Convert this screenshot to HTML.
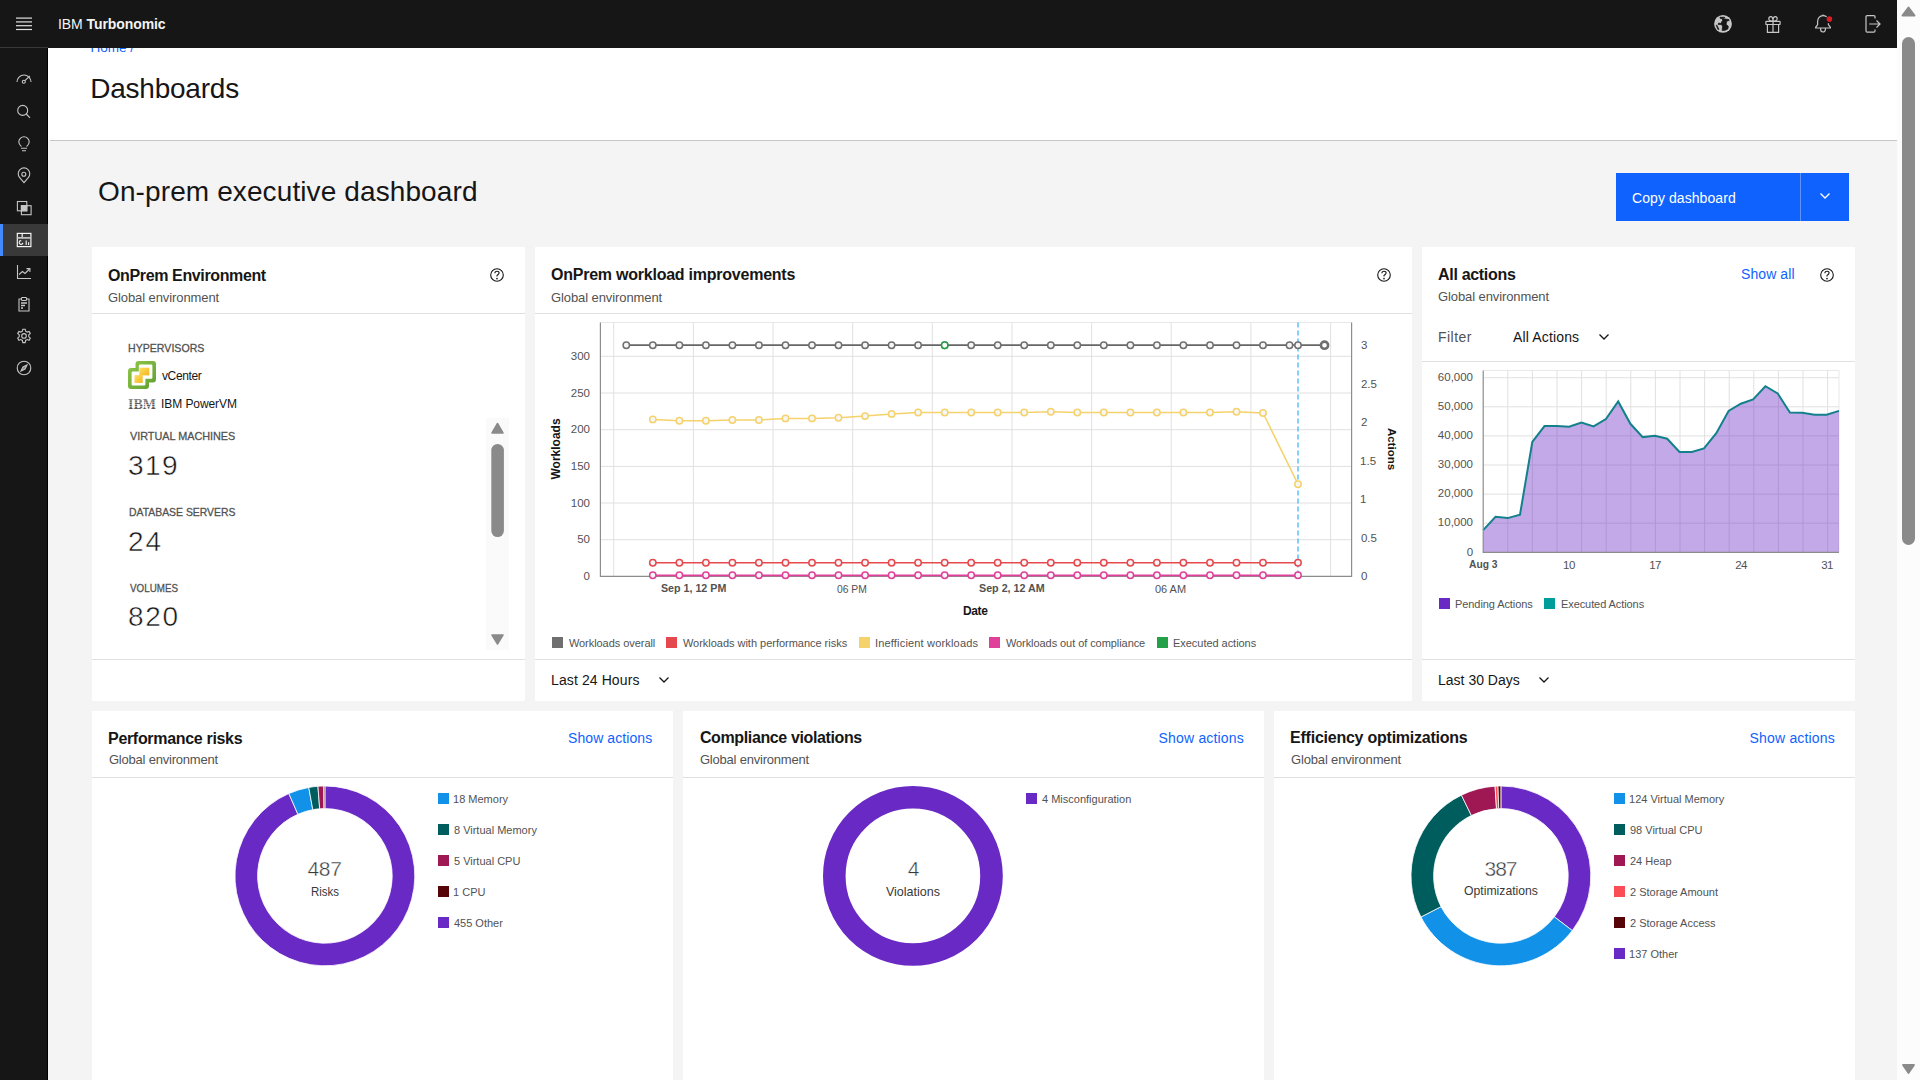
<!DOCTYPE html>
<html><head><meta charset="utf-8">
<style>
*{box-sizing:border-box;margin:0;padding:0}
html,body{width:1920px;height:1080px;overflow:hidden;background:#f4f4f4;font-family:"Liberation Sans",sans-serif;color:#161616}
.abs{position:absolute}
#topbar{position:absolute;left:0;top:0;width:1897px;height:48px;background:#161616;z-index:5}
.tb{z-index:6}
#sidebar{position:absolute;left:0;top:48px;width:48px;height:1032px;background:#161616;border-right:1px solid #000}
#sideline{position:absolute;left:0;top:47px;width:48px;height:1px;background:#393939;z-index:6}
#pagehead{position:absolute;left:48px;top:48px;width:1849px;height:92px;background:#fff}
#headline{position:absolute;left:50px;top:140px;width:1847px;height:1px;background:#c6c6c6}
#vscroll{position:absolute;left:1897px;top:0;width:23px;height:1080px;background:#fcfcfc}
.card{position:absolute;background:#fff}
.sep{position:absolute;height:1px;background:#e0e0e0}
.ttl{position:absolute;font-size:16px;font-weight:bold;white-space:nowrap;line-height:1}
.sub{position:absolute;font-size:12px;color:#525252;white-space:nowrap;line-height:1}
.lnk{position:absolute;font-size:14px;color:#0f62fe;white-space:nowrap;line-height:1}
.t{position:absolute;white-space:nowrap;line-height:1}
.lbl{font-size:12px;color:#525252;font-weight:normal;letter-spacing:0.2px}
.val{font-size:13px;color:#161616}
.big{font-size:28px;color:#161616}
.ax{font-size:12px;color:#525252}
.axb{font-size:12px;color:#393939;font-weight:bold}
.leg{font-size:12px;color:#525252}
.sq{width:11px;height:11px}
.drop{font-size:14px;color:#161616}
.dnum{font-size:20px;color:#393939}
.dlbl{font-size:14px;color:#393939}
svg{position:absolute;overflow:visible}
</style></head>
<body>
<div id="sideline"></div>
<div id="sidebar"></div>
<div id="pagehead"></div>
<div id="headline"></div>
<div id="vscroll"></div>


<!-- sidebar icons -->
<div class="abs" style="left:0;top:224px;width:48px;height:32px;background:#393939"></div>
<div class="abs" style="left:0;top:224px;width:3px;height:32px;background:#4589ff"></div>
<svg style="left:16px;top:71px" width="16" height="16" fill="none" stroke="#c6c6c6" stroke-width="1.1">
  <path d="M1 11 A7 7 0 0 1 15 11"/><circle cx="7.8" cy="10.8" r="1.5"/><path d="M8.9 9.7 L13.9 4.9"/>
</svg>
<svg style="left:16px;top:103px" width="16" height="16" fill="none" stroke="#c6c6c6" stroke-width="1.1">
  <circle cx="6.7" cy="7.4" r="5"/><path d="M10.3 11 L14 14.8"/>
</svg>
<svg style="left:16px;top:135px" width="16" height="16" fill="none" stroke="#c6c6c6" stroke-width="1.1">
  <path d="M5.4 11.6 C4.2 10.5 2.8 9.2 2.8 7 A5.2 5.2 0 0 1 13.2 7 C13.2 9.2 11.8 10.5 10.6 11.6"/><path d="M5 13.2 H11 M6 15.8 H10"/>
</svg>
<svg style="left:16px;top:167px" width="16" height="16" fill="none" stroke="#c6c6c6" stroke-width="1.1">
  <path d="M8 15.6 L3.7 10.6 A5.8 5.8 0 1 1 12.3 10.6 Z"/><circle cx="7.8" cy="7.2" r="2"/>
</svg>
<svg style="left:16px;top:199px" width="16" height="16" fill="none" stroke="#c6c6c6" stroke-width="1.1">
  <rect x="1.4" y="2.5" width="9.4" height="9.3"/><rect x="5.4" y="6.7" width="9.7" height="9"/><rect x="5.4" y="6.7" width="5.4" height="5.1" fill="#c6c6c6"/>
</svg>
<svg style="left:16px;top:231px" width="16" height="16" fill="none" stroke="#f4f4f4" stroke-width="1.2">
  <rect x="1.3" y="2.4" width="13.6" height="13.2"/><path d="M1.3 6.9 H14.9" stroke="#c6c6c6" stroke-width="1.7"/><path d="M6.2 2.4 V6.2"/>
  <path d="M6.9 11.9 A1.9 1.9 0 1 1 5.2 9.6" stroke-width="1.1"/><path d="M10.2 9.4 V14 M12.6 11.2 V14" stroke-width="1.1"/>
</svg>
<svg style="left:16px;top:264px" width="16" height="16" fill="none" stroke="#c6c6c6" stroke-width="1.1">
  <path d="M1.5 1 V14.5 H15"/><path d="M3 10.5 L6.5 7.5 L9 9.5 L13.5 5"/><path d="M10.5 4.6 H13.9 V8"/>
</svg>
<svg style="left:16px;top:296px" width="16" height="16" fill="none" stroke="#c6c6c6" stroke-width="1.1">
  <path d="M5 3 H3 V15 H13 V3 H11"/><rect x="5.5" y="1.5" width="5" height="3" rx="0.8"/><path d="M5 7 H11 M5 9.5 H9 M5 12 H7" stroke-width="1.3"/>
</svg>
<svg style="left:16px;top:328px" width="16" height="16" fill="none" stroke="#c6c6c6" stroke-width="1.1">
  <path d="M6.8 1.2 H9.2 L9.6 3.2 L11.2 4.1 L13.1 3.4 L14.3 5.5 L12.8 6.8 V8.8 L14.3 10.1 L13.1 12.2 L11.2 11.5 L9.6 12.4 L9.2 14.6 H6.8 L6.4 12.4 L4.8 11.5 L2.9 12.2 L1.7 10.1 L3.2 8.8 V6.8 L1.7 5.5 L2.9 3.4 L4.8 4.1 L6.4 3.2 Z"/><circle cx="8" cy="7.9" r="2.3"/>
</svg>
<svg style="left:16px;top:360px" width="16" height="16" fill="none" stroke="#c6c6c6" stroke-width="1.1">
  <circle cx="8" cy="8" r="6.8"/><path d="M11 5 L9 9 L5 11 L7 7 Z" fill="#c6c6c6" fill-opacity="0.6"/>
</svg>

<!-- page header -->
<div id="topbar"></div>
<!-- top right icons -->
<svg class="tb" style="left:1713px;top:14px" width="20" height="20">
  <circle cx="10" cy="9.9" r="8.9" fill="#c6c6c6"/>
  <path d="M6.9 3.3 L11.8 3.3 L10.4 4.7 L15.8 5.6 L16.2 6.4 L13.6 7.3 L13.1 10.4 L15.3 12.2 L14.9 14.9 L12.2 16.2 L9.1 16.4 L9.6 12.2 L8.2 10.4 L5.1 10.4 L5.6 9.1 L7.8 9.6 L9.6 6.4 L9.1 4.4 L7.3 4.4 Z" fill="#161616" stroke="#161616" stroke-width="0.8" stroke-linejoin="round"/>
  <path d="M3.1 11.3 L3.8 11.1 L6 15.3 L5.1 15.8 Z" fill="#161616" stroke="#161616" stroke-width="0.6"/>
</svg>
<svg class="tb" style="left:1763px;top:14px" width="20" height="20" fill="none" stroke="#c6c6c6" stroke-width="1.2">
  <rect x="2.9" y="7.3" width="14.2" height="3.2" rx="0.6"/><path d="M4.4 10.5 V18.3 H15.6 V10.5"/><path d="M10 7.3 V18.3"/>
  <path d="M10 7.2 C8.5 7.2 5.8 7 5.8 4.8 C5.8 3.6 6.7 2.7 7.8 2.7 C9.2 2.7 10 4.2 10 7.2 C10 4.2 10.8 2.7 12.2 2.7 C13.3 2.7 14.2 3.6 14.2 4.8 C14.2 7 11.5 7.2 10 7.2 Z"/>
</svg>
<svg class="tb" style="left:1813px;top:14px" width="20" height="20" fill="none" stroke="#c6c6c6" stroke-width="1.2">
  <path d="M13.6 2.9 C12.6 2 11.3 1.6 10 1.6 C6.8 1.6 4.6 4.3 4.6 7.6 V10.6 L2.6 13.3 V14 H17.4 V13.3 L15.4 10.6 V9.2" stroke-linejoin="round"/><path d="M10 0.6 V1.6"/><path d="M7.6 14 V15.6 A2.4 2.4 0 0 0 12.4 15.6 V14"/>
</svg>
<svg class="tb" style="left:1823px;top:14px" width="12" height="12"><circle cx="6.4" cy="5.1" r="2.8" fill="#da1e28"/></svg>
<svg class="tb" style="left:1862px;top:14px" width="20" height="20" fill="none" stroke="#c6c6c6" stroke-width="1.2">
  <path d="M13 4.6 V2.7 Q13 1.6 11.9 1.6 H5.1 Q4 1.6 4 2.7 V17.1 Q4 18.2 5.1 18.2 H11.9 Q13 18.2 13 17.1 V15.5"/><path d="M7.2 10 H17.6 M14.5 6.5 L18 10 L14.5 13.5"/>
</svg>

<!-- top bar content -->
<svg class="tb" style="left:0;top:0" width="48" height="48">
  <g fill="#e0e0e0"><rect x="16" y="17.5" width="16" height="1.2"/><rect x="16" y="21.3" width="16" height="1.2"/><rect x="16" y="25.1" width="16" height="1.2"/><rect x="16" y="28.9" width="16" height="1.2"/></g>
</svg>


<!-- copy button -->
<div class="abs" style="left:1616px;top:173px;width:184px;height:48px;background:#0f62fe"></div>
<div class="abs" style="left:1800px;top:173px;width:1px;height:48px;background:#5f94fe"></div>
<div class="abs" style="left:1801px;top:173px;width:48px;height:48px;background:#0f62fe"></div>

<!-- cards -->
<div class="card" style="left:92px;top:247px;width:433px;height:454px"></div>
<div class="card" style="left:535px;top:247px;width:877px;height:454px"></div>
<div class="card" style="left:1422px;top:247px;width:433px;height:454px"></div>
<div class="card" style="left:92px;top:711px;width:581px;height:369px"></div>
<div class="card" style="left:683px;top:711px;width:581px;height:369px"></div>
<div class="card" style="left:1274px;top:711px;width:581px;height:369px"></div>

<div class="sep" style="left:92px;top:313px;width:433px"></div>
<div class="sep" style="left:535px;top:313px;width:877px"></div>
<div class="sep" style="left:1422px;top:361px;width:433px"></div>
<div class="sep" style="left:92px;top:659px;width:433px"></div>
<div class="sep" style="left:535px;top:659px;width:877px"></div>
<div class="sep" style="left:1422px;top:659px;width:433px"></div>
<div class="sep" style="left:92px;top:777px;width:581px"></div>
<div class="sep" style="left:683px;top:777px;width:581px"></div>
<div class="sep" style="left:1274px;top:777px;width:581px"></div>




<!-- help icons -->
<svg style="left:489px;top:267px" width="16" height="16" fill="none" stroke="#161616" stroke-width="1.1"><circle cx="8" cy="8" r="6.3"/><path d="M5.9 6.3 C5.9 5 6.9 4.3 8 4.3 C9.2 4.3 10.1 5.1 10.1 6.1 C10.1 7.3 8.6 7.7 8 8.5 V9.6" /><circle cx="8" cy="11.6" r="0.85" fill="#161616" stroke="none"/></svg>
<svg style="left:1376px;top:267px" width="16" height="16" fill="none" stroke="#161616" stroke-width="1.1"><circle cx="8" cy="8" r="6.3"/><path d="M5.9 6.3 C5.9 5 6.9 4.3 8 4.3 C9.2 4.3 10.1 5.1 10.1 6.1 C10.1 7.3 8.6 7.7 8 8.5 V9.6" /><circle cx="8" cy="11.6" r="0.85" fill="#161616" stroke="none"/></svg>
<svg style="left:1819px;top:267px" width="16" height="16" fill="none" stroke="#161616" stroke-width="1.1"><circle cx="8" cy="8" r="6.3"/><path d="M5.9 6.3 C5.9 5 6.9 4.3 8 4.3 C9.2 4.3 10.1 5.1 10.1 6.1 C10.1 7.3 8.6 7.7 8 8.5 V9.6" /><circle cx="8" cy="11.6" r="0.85" fill="#161616" stroke="none"/></svg>

<!-- card1 content -->
<svg style="left:128px;top:361px" width="28" height="28">
  <defs><linearGradient id="vg" x1="0" y1="0" x2="1" y2="1"><stop offset="0" stop-color="#93c84a"/><stop offset="1" stop-color="#5e9e30"/></linearGradient>
  <linearGradient id="yg" x1="0" y1="0" x2="1" y2="1"><stop offset="0" stop-color="#ffe066"/><stop offset="1" stop-color="#f2b51c"/></linearGradient></defs>
  <path d="M10.5 0 H25 Q28 0 28 3 V18 Q28 21.5 25 21.5 H21 V25 Q21 28 18 28 H3 Q0 28 0 25 V10 Q0 7 3 7 H7.5 V3 Q7.5 0 10.5 0 Z" fill="url(#vg)"/>
  <path d="M12 3.6 H23.2 Q24.4 3.6 24.4 4.8 V16.6 Q24.4 17.8 23.2 17.8 H17.4 V23.2 Q17.4 24.4 16.2 24.4 H4.8 Q3.6 24.4 3.6 23.2 V11.8 Q3.6 10.6 4.8 10.6 H10.8 V4.8 Q10.8 3.6 12 3.6 Z" fill="#fff"/>
  <rect x="11.3" y="6.7" width="10" height="7.7" fill="url(#yg)"/>
  <rect x="6.5" y="14.1" width="8.2" height="7.8" fill="url(#yg)"/>
</svg>
<svg style="left:128px;top:397px" width="28" height="13"><text x="0" y="11.5" font-family="Liberation Serif" font-weight="bold" font-size="14" fill="#555" textLength="28" lengthAdjust="spacingAndGlyphs">IBM</text><g stroke="#fff" stroke-width="0.6"><line x1="0" y1="3" x2="28" y2="3"/><line x1="0" y1="5.2" x2="28" y2="5.2"/><line x1="0" y1="7.4" x2="28" y2="7.4"/><line x1="0" y1="9.6" x2="28" y2="9.6"/></g></svg>
<!-- inner scrollbar -->
<div class="abs" style="left:486px;top:418px;width:23px;height:232px;background:#fafafa"></div>
<svg style="left:486px;top:418px" width="23" height="232" fill="#8a8a8a">
  <path d="M11.5 5.5 L17 15 H6 Z" stroke="#8a8a8a" stroke-width="1.5" stroke-linejoin="round"/>
  <rect x="5.3" y="26" width="12.6" height="93" rx="6.3"/>
  <path d="M11.5 226 L17 217 H6 Z" stroke="#8a8a8a" stroke-width="1.5" stroke-linejoin="round"/>
</svg>

<!-- line chart -->
<svg style="left:0;top:0" width="1920" height="1080">
<line x1="613.7" y1="322.5" x2="613.7" y2="576.4" stroke="#e0e0e0" stroke-width="1"/>
<line x1="693.4" y1="322.5" x2="693.4" y2="576.4" stroke="#e0e0e0" stroke-width="1"/>
<line x1="773.0" y1="322.5" x2="773.0" y2="576.4" stroke="#e0e0e0" stroke-width="1"/>
<line x1="852.7" y1="322.5" x2="852.7" y2="576.4" stroke="#e0e0e0" stroke-width="1"/>
<line x1="932.3" y1="322.5" x2="932.3" y2="576.4" stroke="#e0e0e0" stroke-width="1"/>
<line x1="1012.0" y1="322.5" x2="1012.0" y2="576.4" stroke="#e0e0e0" stroke-width="1"/>
<line x1="1091.6" y1="322.5" x2="1091.6" y2="576.4" stroke="#e0e0e0" stroke-width="1"/>
<line x1="1171.2" y1="322.5" x2="1171.2" y2="576.4" stroke="#e0e0e0" stroke-width="1"/>
<line x1="1250.9" y1="322.5" x2="1250.9" y2="576.4" stroke="#e0e0e0" stroke-width="1"/>
<line x1="1330.6" y1="322.5" x2="1330.6" y2="576.4" stroke="#e0e0e0" stroke-width="1"/>
<line x1="600.4" y1="539.7" x2="1351.6" y2="539.7" stroke="#e0e0e0" stroke-width="1"/>
<line x1="600.4" y1="503.0" x2="1351.6" y2="503.0" stroke="#e0e0e0" stroke-width="1"/>
<line x1="600.4" y1="466.4" x2="1351.6" y2="466.4" stroke="#e0e0e0" stroke-width="1"/>
<line x1="600.4" y1="429.7" x2="1351.6" y2="429.7" stroke="#e0e0e0" stroke-width="1"/>
<line x1="600.4" y1="393.0" x2="1351.6" y2="393.0" stroke="#e0e0e0" stroke-width="1"/>
<line x1="600.4" y1="356.3" x2="1351.6" y2="356.3" stroke="#e0e0e0" stroke-width="1"/>
<line x1="600.4" y1="322.5" x2="1351.6" y2="322.5" stroke="#e8e8e8" stroke-width="1"/>
<path d="M600.4 322.5 V576.4 H1351.6 V322.5" fill="none" stroke="#8d8d8d" stroke-width="1.2"/>
<line x1="1298" y1="322.5" x2="1298" y2="576.4" stroke="#33b1ff" stroke-width="1.2" stroke-dasharray="5 3"/>
<polyline points="626.3,345.2 652.8,345.2 679.4,345.2 705.9,345.2 732.4,345.2 758.9,345.2 785.5,345.2 812.0,345.2 838.5,345.2 865.1,345.2 891.6,345.2 918.1,345.2 944.7,345.2 971.2,345.2 997.7,345.2 1024.2,345.2 1050.8,345.2 1077.3,345.2 1103.8,345.2 1130.4,345.2 1156.9,345.2 1183.4,345.2 1210.0,345.2 1236.5,345.2 1263.0,345.2 1289.5,345.2 1298.0,345.2 1324.5,345.2" fill="none" stroke="#666666" stroke-width="1.7"/>
<polyline points="652.8,419.4 679.4,420.7 705.9,420.7 732.4,420.0 758.9,420.0 785.5,418.4 812.0,418.4 838.5,417.8 865.1,416.1 891.6,413.9 918.1,412.5 944.7,412.5 971.2,412.5 997.7,412.5 1024.2,412.5 1050.8,411.8 1077.3,412.5 1103.8,412.5 1130.4,412.5 1156.9,412.5 1183.4,412.5 1210.0,412.5 1236.5,411.8 1263.0,413.0 1298.0,484.2" fill="none" stroke="#f5d26b" stroke-width="1.5"/>
<polyline points="652.8,562.7 679.4,562.7 705.9,562.7 732.4,562.7 758.9,562.7 785.5,562.7 812.0,562.7 838.5,562.7 865.1,562.7 891.6,562.7 918.1,562.7 944.7,562.7 971.2,562.7 997.7,562.7 1024.2,562.7 1050.8,562.7 1077.3,562.7 1103.8,562.7 1130.4,562.7 1156.9,562.7 1183.4,562.7 1210.0,562.7 1236.5,562.7 1263.0,562.7 1298.0,562.7" fill="none" stroke="#e5484d" stroke-width="1.5"/>
<polyline points="652.8,575.3 679.4,575.3 705.9,575.3 732.4,575.3 758.9,575.3 785.5,575.3 812.0,575.3 838.5,575.3 865.1,575.3 891.6,575.3 918.1,575.3 944.7,575.3 971.2,575.3 997.7,575.3 1024.2,575.3 1050.8,575.3 1077.3,575.3 1103.8,575.3 1130.4,575.3 1156.9,575.3 1183.4,575.3 1210.0,575.3 1236.5,575.3 1263.0,575.3 1298.0,575.3" fill="none" stroke="#e0409a" stroke-width="1.8"/>
<circle cx="626.3" cy="345.2" r="3.2" fill="#f6f6f6" stroke="#6f6f6f" stroke-width="1.5"/><circle cx="652.8" cy="345.2" r="3.2" fill="#f6f6f6" stroke="#6f6f6f" stroke-width="1.5"/><circle cx="679.4" cy="345.2" r="3.2" fill="#f6f6f6" stroke="#6f6f6f" stroke-width="1.5"/><circle cx="705.9" cy="345.2" r="3.2" fill="#f6f6f6" stroke="#6f6f6f" stroke-width="1.5"/><circle cx="732.4" cy="345.2" r="3.2" fill="#f6f6f6" stroke="#6f6f6f" stroke-width="1.5"/><circle cx="758.9" cy="345.2" r="3.2" fill="#f6f6f6" stroke="#6f6f6f" stroke-width="1.5"/><circle cx="785.5" cy="345.2" r="3.2" fill="#f6f6f6" stroke="#6f6f6f" stroke-width="1.5"/><circle cx="812.0" cy="345.2" r="3.2" fill="#f6f6f6" stroke="#6f6f6f" stroke-width="1.5"/><circle cx="838.5" cy="345.2" r="3.2" fill="#f6f6f6" stroke="#6f6f6f" stroke-width="1.5"/><circle cx="865.1" cy="345.2" r="3.2" fill="#f6f6f6" stroke="#6f6f6f" stroke-width="1.5"/><circle cx="891.6" cy="345.2" r="3.2" fill="#f6f6f6" stroke="#6f6f6f" stroke-width="1.5"/><circle cx="918.1" cy="345.2" r="3.2" fill="#f6f6f6" stroke="#6f6f6f" stroke-width="1.5"/><circle cx="944.7" cy="345.2" r="3.2" fill="#f6f6f6" stroke="#6f6f6f" stroke-width="1.5"/><circle cx="971.2" cy="345.2" r="3.2" fill="#f6f6f6" stroke="#6f6f6f" stroke-width="1.5"/><circle cx="997.7" cy="345.2" r="3.2" fill="#f6f6f6" stroke="#6f6f6f" stroke-width="1.5"/><circle cx="1024.2" cy="345.2" r="3.2" fill="#f6f6f6" stroke="#6f6f6f" stroke-width="1.5"/><circle cx="1050.8" cy="345.2" r="3.2" fill="#f6f6f6" stroke="#6f6f6f" stroke-width="1.5"/><circle cx="1077.3" cy="345.2" r="3.2" fill="#f6f6f6" stroke="#6f6f6f" stroke-width="1.5"/><circle cx="1103.8" cy="345.2" r="3.2" fill="#f6f6f6" stroke="#6f6f6f" stroke-width="1.5"/><circle cx="1130.4" cy="345.2" r="3.2" fill="#f6f6f6" stroke="#6f6f6f" stroke-width="1.5"/><circle cx="1156.9" cy="345.2" r="3.2" fill="#f6f6f6" stroke="#6f6f6f" stroke-width="1.5"/><circle cx="1183.4" cy="345.2" r="3.2" fill="#f6f6f6" stroke="#6f6f6f" stroke-width="1.5"/><circle cx="1210.0" cy="345.2" r="3.2" fill="#f6f6f6" stroke="#6f6f6f" stroke-width="1.5"/><circle cx="1236.5" cy="345.2" r="3.2" fill="#f6f6f6" stroke="#6f6f6f" stroke-width="1.5"/><circle cx="1263.0" cy="345.2" r="3.2" fill="#f6f6f6" stroke="#6f6f6f" stroke-width="1.5"/><circle cx="1289.5" cy="345.2" r="3.2" fill="#f6f6f6" stroke="#6f6f6f" stroke-width="1.5"/><circle cx="1298.0" cy="345.2" r="3.2" fill="#f6f6f6" stroke="#6f6f6f" stroke-width="1.5"/>
<circle cx="1324.5" cy="345.2" r="3.6" fill="#fff" stroke="#6f6f6f" stroke-width="2.6"/>
<circle cx="944.7" cy="345.2" r="3.2" fill="#fff" stroke="#24a148" stroke-width="1.5"/>
<circle cx="652.8" cy="419.4" r="3.2" fill="#f6f6f6" stroke="#f5d26b" stroke-width="1.5"/><circle cx="679.4" cy="420.7" r="3.2" fill="#f6f6f6" stroke="#f5d26b" stroke-width="1.5"/><circle cx="705.9" cy="420.7" r="3.2" fill="#f6f6f6" stroke="#f5d26b" stroke-width="1.5"/><circle cx="732.4" cy="420.0" r="3.2" fill="#f6f6f6" stroke="#f5d26b" stroke-width="1.5"/><circle cx="758.9" cy="420.0" r="3.2" fill="#f6f6f6" stroke="#f5d26b" stroke-width="1.5"/><circle cx="785.5" cy="418.4" r="3.2" fill="#f6f6f6" stroke="#f5d26b" stroke-width="1.5"/><circle cx="812.0" cy="418.4" r="3.2" fill="#f6f6f6" stroke="#f5d26b" stroke-width="1.5"/><circle cx="838.5" cy="417.8" r="3.2" fill="#f6f6f6" stroke="#f5d26b" stroke-width="1.5"/><circle cx="865.1" cy="416.1" r="3.2" fill="#f6f6f6" stroke="#f5d26b" stroke-width="1.5"/><circle cx="891.6" cy="413.9" r="3.2" fill="#f6f6f6" stroke="#f5d26b" stroke-width="1.5"/><circle cx="918.1" cy="412.5" r="3.2" fill="#f6f6f6" stroke="#f5d26b" stroke-width="1.5"/><circle cx="944.7" cy="412.5" r="3.2" fill="#f6f6f6" stroke="#f5d26b" stroke-width="1.5"/><circle cx="971.2" cy="412.5" r="3.2" fill="#f6f6f6" stroke="#f5d26b" stroke-width="1.5"/><circle cx="997.7" cy="412.5" r="3.2" fill="#f6f6f6" stroke="#f5d26b" stroke-width="1.5"/><circle cx="1024.2" cy="412.5" r="3.2" fill="#f6f6f6" stroke="#f5d26b" stroke-width="1.5"/><circle cx="1050.8" cy="411.8" r="3.2" fill="#f6f6f6" stroke="#f5d26b" stroke-width="1.5"/><circle cx="1077.3" cy="412.5" r="3.2" fill="#f6f6f6" stroke="#f5d26b" stroke-width="1.5"/><circle cx="1103.8" cy="412.5" r="3.2" fill="#f6f6f6" stroke="#f5d26b" stroke-width="1.5"/><circle cx="1130.4" cy="412.5" r="3.2" fill="#f6f6f6" stroke="#f5d26b" stroke-width="1.5"/><circle cx="1156.9" cy="412.5" r="3.2" fill="#f6f6f6" stroke="#f5d26b" stroke-width="1.5"/><circle cx="1183.4" cy="412.5" r="3.2" fill="#f6f6f6" stroke="#f5d26b" stroke-width="1.5"/><circle cx="1210.0" cy="412.5" r="3.2" fill="#f6f6f6" stroke="#f5d26b" stroke-width="1.5"/><circle cx="1236.5" cy="411.8" r="3.2" fill="#f6f6f6" stroke="#f5d26b" stroke-width="1.5"/><circle cx="1263.0" cy="413.0" r="3.2" fill="#f6f6f6" stroke="#f5d26b" stroke-width="1.5"/><circle cx="1298.0" cy="484.2" r="3.2" fill="#f6f6f6" stroke="#f5d26b" stroke-width="1.5"/>
<circle cx="652.8" cy="562.7" r="3.2" fill="#f6f6f6" stroke="#e5484d" stroke-width="1.5"/><circle cx="679.4" cy="562.7" r="3.2" fill="#f6f6f6" stroke="#e5484d" stroke-width="1.5"/><circle cx="705.9" cy="562.7" r="3.2" fill="#f6f6f6" stroke="#e5484d" stroke-width="1.5"/><circle cx="732.4" cy="562.7" r="3.2" fill="#f6f6f6" stroke="#e5484d" stroke-width="1.5"/><circle cx="758.9" cy="562.7" r="3.2" fill="#f6f6f6" stroke="#e5484d" stroke-width="1.5"/><circle cx="785.5" cy="562.7" r="3.2" fill="#f6f6f6" stroke="#e5484d" stroke-width="1.5"/><circle cx="812.0" cy="562.7" r="3.2" fill="#f6f6f6" stroke="#e5484d" stroke-width="1.5"/><circle cx="838.5" cy="562.7" r="3.2" fill="#f6f6f6" stroke="#e5484d" stroke-width="1.5"/><circle cx="865.1" cy="562.7" r="3.2" fill="#f6f6f6" stroke="#e5484d" stroke-width="1.5"/><circle cx="891.6" cy="562.7" r="3.2" fill="#f6f6f6" stroke="#e5484d" stroke-width="1.5"/><circle cx="918.1" cy="562.7" r="3.2" fill="#f6f6f6" stroke="#e5484d" stroke-width="1.5"/><circle cx="944.7" cy="562.7" r="3.2" fill="#f6f6f6" stroke="#e5484d" stroke-width="1.5"/><circle cx="971.2" cy="562.7" r="3.2" fill="#f6f6f6" stroke="#e5484d" stroke-width="1.5"/><circle cx="997.7" cy="562.7" r="3.2" fill="#f6f6f6" stroke="#e5484d" stroke-width="1.5"/><circle cx="1024.2" cy="562.7" r="3.2" fill="#f6f6f6" stroke="#e5484d" stroke-width="1.5"/><circle cx="1050.8" cy="562.7" r="3.2" fill="#f6f6f6" stroke="#e5484d" stroke-width="1.5"/><circle cx="1077.3" cy="562.7" r="3.2" fill="#f6f6f6" stroke="#e5484d" stroke-width="1.5"/><circle cx="1103.8" cy="562.7" r="3.2" fill="#f6f6f6" stroke="#e5484d" stroke-width="1.5"/><circle cx="1130.4" cy="562.7" r="3.2" fill="#f6f6f6" stroke="#e5484d" stroke-width="1.5"/><circle cx="1156.9" cy="562.7" r="3.2" fill="#f6f6f6" stroke="#e5484d" stroke-width="1.5"/><circle cx="1183.4" cy="562.7" r="3.2" fill="#f6f6f6" stroke="#e5484d" stroke-width="1.5"/><circle cx="1210.0" cy="562.7" r="3.2" fill="#f6f6f6" stroke="#e5484d" stroke-width="1.5"/><circle cx="1236.5" cy="562.7" r="3.2" fill="#f6f6f6" stroke="#e5484d" stroke-width="1.5"/><circle cx="1263.0" cy="562.7" r="3.2" fill="#f6f6f6" stroke="#e5484d" stroke-width="1.5"/><circle cx="1298.0" cy="562.7" r="3.2" fill="#f6f6f6" stroke="#e5484d" stroke-width="1.5"/>
<circle cx="652.8" cy="575.3" r="3.2" fill="#f6f6f6" stroke="#e0409a" stroke-width="1.5"/><circle cx="679.4" cy="575.3" r="3.2" fill="#f6f6f6" stroke="#e0409a" stroke-width="1.5"/><circle cx="705.9" cy="575.3" r="3.2" fill="#f6f6f6" stroke="#e0409a" stroke-width="1.5"/><circle cx="732.4" cy="575.3" r="3.2" fill="#f6f6f6" stroke="#e0409a" stroke-width="1.5"/><circle cx="758.9" cy="575.3" r="3.2" fill="#f6f6f6" stroke="#e0409a" stroke-width="1.5"/><circle cx="785.5" cy="575.3" r="3.2" fill="#f6f6f6" stroke="#e0409a" stroke-width="1.5"/><circle cx="812.0" cy="575.3" r="3.2" fill="#f6f6f6" stroke="#e0409a" stroke-width="1.5"/><circle cx="838.5" cy="575.3" r="3.2" fill="#f6f6f6" stroke="#e0409a" stroke-width="1.5"/><circle cx="865.1" cy="575.3" r="3.2" fill="#f6f6f6" stroke="#e0409a" stroke-width="1.5"/><circle cx="891.6" cy="575.3" r="3.2" fill="#f6f6f6" stroke="#e0409a" stroke-width="1.5"/><circle cx="918.1" cy="575.3" r="3.2" fill="#f6f6f6" stroke="#e0409a" stroke-width="1.5"/><circle cx="944.7" cy="575.3" r="3.2" fill="#f6f6f6" stroke="#e0409a" stroke-width="1.5"/><circle cx="971.2" cy="575.3" r="3.2" fill="#f6f6f6" stroke="#e0409a" stroke-width="1.5"/><circle cx="997.7" cy="575.3" r="3.2" fill="#f6f6f6" stroke="#e0409a" stroke-width="1.5"/><circle cx="1024.2" cy="575.3" r="3.2" fill="#f6f6f6" stroke="#e0409a" stroke-width="1.5"/><circle cx="1050.8" cy="575.3" r="3.2" fill="#f6f6f6" stroke="#e0409a" stroke-width="1.5"/><circle cx="1077.3" cy="575.3" r="3.2" fill="#f6f6f6" stroke="#e0409a" stroke-width="1.5"/><circle cx="1103.8" cy="575.3" r="3.2" fill="#f6f6f6" stroke="#e0409a" stroke-width="1.5"/><circle cx="1130.4" cy="575.3" r="3.2" fill="#f6f6f6" stroke="#e0409a" stroke-width="1.5"/><circle cx="1156.9" cy="575.3" r="3.2" fill="#f6f6f6" stroke="#e0409a" stroke-width="1.5"/><circle cx="1183.4" cy="575.3" r="3.2" fill="#f6f6f6" stroke="#e0409a" stroke-width="1.5"/><circle cx="1210.0" cy="575.3" r="3.2" fill="#f6f6f6" stroke="#e0409a" stroke-width="1.5"/><circle cx="1236.5" cy="575.3" r="3.2" fill="#f6f6f6" stroke="#e0409a" stroke-width="1.5"/><circle cx="1263.0" cy="575.3" r="3.2" fill="#f6f6f6" stroke="#e0409a" stroke-width="1.5"/><circle cx="1298.0" cy="575.3" r="3.2" fill="#f6f6f6" stroke="#e0409a" stroke-width="1.5"/>
</svg>
<!-- legend -->
<div class="abs sq" style="left:552px;top:637px;background:#6f6f6f"></div>
<div class="abs sq" style="left:666px;top:637px;background:#e5484d"></div>
<div class="abs sq" style="left:859px;top:637px;background:#f5d26b"></div>
<div class="abs sq" style="left:989px;top:637px;background:#e0409a"></div>
<div class="abs sq" style="left:1157px;top:637px;background:#24a148"></div>
<svg style="left:657px;top:674px" width="14" height="12" fill="none" stroke="#161616" stroke-width="1.3"><path d="M2.5 3.5 L7 8 L11.5 3.5"/></svg>

<!-- area chart -->
<svg style="left:1597px;top:331px" width="14" height="12" fill="none" stroke="#161616" stroke-width="1.3"><path d="M2.5 3.5 L7 8 L11.5 3.5"/></svg>
<svg style="left:0;top:0" width="1920" height="1080">
<line x1="1507.8" y1="370.4" x2="1507.8" y2="552.3" stroke="#e0e0e0" stroke-width="1"/>
<line x1="1532.4" y1="370.4" x2="1532.4" y2="552.3" stroke="#e0e0e0" stroke-width="1"/>
<line x1="1557.0" y1="370.4" x2="1557.0" y2="552.3" stroke="#e0e0e0" stroke-width="1"/>
<line x1="1581.6" y1="370.4" x2="1581.6" y2="552.3" stroke="#e0e0e0" stroke-width="1"/>
<line x1="1606.2" y1="370.4" x2="1606.2" y2="552.3" stroke="#e0e0e0" stroke-width="1"/>
<line x1="1630.8" y1="370.4" x2="1630.8" y2="552.3" stroke="#e0e0e0" stroke-width="1"/>
<line x1="1655.4" y1="370.4" x2="1655.4" y2="552.3" stroke="#e0e0e0" stroke-width="1"/>
<line x1="1680.0" y1="370.4" x2="1680.0" y2="552.3" stroke="#e0e0e0" stroke-width="1"/>
<line x1="1704.6" y1="370.4" x2="1704.6" y2="552.3" stroke="#e0e0e0" stroke-width="1"/>
<line x1="1729.2" y1="370.4" x2="1729.2" y2="552.3" stroke="#e0e0e0" stroke-width="1"/>
<line x1="1753.8" y1="370.4" x2="1753.8" y2="552.3" stroke="#e0e0e0" stroke-width="1"/>
<line x1="1778.4" y1="370.4" x2="1778.4" y2="552.3" stroke="#e0e0e0" stroke-width="1"/>
<line x1="1803.0" y1="370.4" x2="1803.0" y2="552.3" stroke="#e0e0e0" stroke-width="1"/>
<line x1="1827.6" y1="370.4" x2="1827.6" y2="552.3" stroke="#e0e0e0" stroke-width="1"/>
<line x1="1483.2" y1="523.2" x2="1839" y2="523.2" stroke="#e0e0e0" stroke-width="1"/>
<line x1="1483.2" y1="494.1" x2="1839" y2="494.1" stroke="#e0e0e0" stroke-width="1"/>
<line x1="1483.2" y1="465.0" x2="1839" y2="465.0" stroke="#e0e0e0" stroke-width="1"/>
<line x1="1483.2" y1="435.9" x2="1839" y2="435.9" stroke="#e0e0e0" stroke-width="1"/>
<line x1="1483.2" y1="406.8" x2="1839" y2="406.8" stroke="#e0e0e0" stroke-width="1"/>
<line x1="1483.2" y1="377.7" x2="1839" y2="377.7" stroke="#e0e0e0" stroke-width="1"/>
<line x1="1483.2" y1="370.4" x2="1839" y2="370.4" stroke="#e8e8e8" stroke-width="1"/>
<line x1="1839" y1="370.4" x2="1839" y2="552.3" stroke="#e8e8e8" stroke-width="1"/>
<path d="M1483.2 530.1 L1495.5 516.8 L1507.7 518.1 L1520.0 514.6 L1532.3 442.0 L1544.5 426.1 L1556.8 426.1 L1569.1 426.8 L1581.4 422.5 L1593.6 426.4 L1605.9 419.0 L1618.2 401.5 L1630.4 423.8 L1642.7 437.1 L1655.0 435.8 L1667.2 438.7 L1679.5 452.0 L1691.8 452.0 L1704.0 448.5 L1716.3 433.2 L1728.6 410.9 L1740.8 403.7 L1753.1 399.5 L1765.4 386.2 L1777.7 393.4 L1789.9 412.5 L1802.2 412.8 L1814.5 414.8 L1826.7 414.8 L1839.0 410.9 L1839 552.3 L1483.2 552.3 Z" fill="#6929c4" fill-opacity="0.4" stroke="none"/>
<path d="M1483.2 530.1 L1495.5 516.8 L1507.7 518.1 L1520.0 514.6 L1532.3 442.0 L1544.5 426.1 L1556.8 426.1 L1569.1 426.8 L1581.4 422.5 L1593.6 426.4 L1605.9 419.0 L1618.2 401.5 L1630.4 423.8 L1642.7 437.1 L1655.0 435.8 L1667.2 438.7 L1679.5 452.0 L1691.8 452.0 L1704.0 448.5 L1716.3 433.2 L1728.6 410.9 L1740.8 403.7 L1753.1 399.5 L1765.4 386.2 L1777.7 393.4 L1789.9 412.5 L1802.2 412.8 L1814.5 414.8 L1826.7 414.8 L1839.0 410.9" fill="none" stroke="#13808c" stroke-width="2"/>
<path d="M1483.2 370.4 V552.3 H1839" fill="none" stroke="#8d8d8d" stroke-width="1.2"/>
</svg>
<div class="abs sq" style="left:1439px;top:598px;background:#6929c4"></div>
<div class="abs sq" style="left:1544px;top:598px;background:#009d9a"></div>
<svg style="left:1537px;top:674px" width="14" height="12" fill="none" stroke="#161616" stroke-width="1.3"><path d="M2.5 3.5 L7 8 L11.5 3.5"/></svg>

<!-- copy dashboard chevron -->
<svg style="left:1818px;top:190px" width="14" height="12" fill="none" stroke="#fff" stroke-width="1.3"><path d="M2.5 3.5 L7 8 L11.5 3.5"/></svg>

<!-- donuts -->
<svg style="left:233.1px;top:783.9px" width="183.8" height="183.8">
<path d="M91.90 2.00 A89.9 89.9 0 1 1 55.83 9.55 L64.90 30.25 A67.3 67.3 0 1 0 91.90 24.60 Z" fill="#6929c4" stroke="#fff" stroke-width="0.8"/>
<path d="M55.83 9.55 A89.9 89.9 0 0 1 75.75 3.46 L79.81 25.69 A67.3 67.3 0 0 0 64.90 30.25 Z" fill="#1192e8" stroke="#fff" stroke-width="0.8"/>
<path d="M75.75 3.46 A89.9 89.9 0 0 1 84.95 2.27 L86.70 24.80 A67.3 67.3 0 0 0 79.81 25.69 Z" fill="#005d5d" stroke="#fff" stroke-width="0.8"/>
<path d="M84.95 2.27 A89.9 89.9 0 0 1 90.74 2.01 L91.03 24.61 A67.3 67.3 0 0 0 86.70 24.80 Z" fill="#9f1853" stroke="#fff" stroke-width="0.8"/>
<path d="M90.74 2.01 A89.9 89.9 0 0 1 91.90 2.00 L91.90 24.60 A67.3 67.3 0 0 0 91.03 24.61 Z" fill="#570408" stroke="#fff" stroke-width="0.8"/>
</svg>
<svg style="left:821.1px;top:783.9px" width="183.8" height="183.8">
<circle cx="91.9" cy="91.9" r="78.6" fill="none" stroke="#6929c4" stroke-width="22.60000000000001"/>
</svg>
<svg style="left:1409.1px;top:783.9px" width="183.8" height="183.8">
<path d="M91.90 2.00 A89.9 89.9 0 0 1 163.28 146.56 L145.33 132.82 A67.3 67.3 0 0 0 91.90 24.60 Z" fill="#6929c4" stroke="#fff" stroke-width="0.8"/>
<path d="M163.28 146.56 A89.9 89.9 0 0 1 11.95 133.01 L32.05 122.67 A67.3 67.3 0 0 0 145.33 132.82 Z" fill="#1192e8" stroke="#fff" stroke-width="0.8"/>
<path d="M11.95 133.01 A89.9 89.9 0 0 1 52.42 11.13 L62.35 31.44 A67.3 67.3 0 0 0 32.05 122.67 Z" fill="#005d5d" stroke="#fff" stroke-width="0.8"/>
<path d="M52.42 11.13 A89.9 89.9 0 0 1 86.07 2.19 L87.53 24.74 A67.3 67.3 0 0 0 62.35 31.44 Z" fill="#9f1853" stroke="#fff" stroke-width="0.8"/>
<path d="M86.07 2.19 A89.9 89.9 0 0 1 88.98 2.05 L89.72 24.64 A67.3 67.3 0 0 0 87.53 24.74 Z" fill="#fa4d56" stroke="#fff" stroke-width="0.8"/>
<path d="M88.98 2.05 A89.9 89.9 0 0 1 91.90 2.00 L91.90 24.60 A67.3 67.3 0 0 0 89.72 24.64 Z" fill="#570408" stroke="#fff" stroke-width="0.8"/>
</svg>

<div class="abs sq" style="left:438px;top:793px;background:#1192e8"></div>
<div class="abs sq" style="left:438px;top:824px;background:#005d5d"></div>
<div class="abs sq" style="left:438px;top:855px;background:#9f1853"></div>
<div class="abs sq" style="left:438px;top:886px;background:#570408"></div>
<div class="abs sq" style="left:438px;top:917px;background:#6929c4"></div>

<div class="abs sq" style="left:1026px;top:793px;background:#6929c4"></div>

<div class="abs sq" style="left:1614px;top:793px;background:#1192e8"></div>
<div class="abs sq" style="left:1614px;top:824px;background:#005d5d"></div>
<div class="abs sq" style="left:1614px;top:855px;background:#9f1853"></div>
<div class="abs sq" style="left:1614px;top:886px;background:#fa4d56"></div>
<div class="abs sq" style="left:1614px;top:917px;background:#570408"></div>
<div class="abs sq" style="left:1614px;top:948px;background:#6929c4"></div>

<!-- main scrollbar -->
<svg style="left:1897px;top:0" width="23" height="1080" fill="#8a8a8a">
  <path d="M11.5 7.5 L17.5 15.5 H5.5 Z" stroke="#8a8a8a" stroke-width="2" stroke-linejoin="round"/>
  <rect x="5" y="37" width="13" height="508" rx="6.5"/>
  <path d="M11.5 1073 L17 1065 H6 Z" stroke="#8a8a8a" stroke-width="1.8" stroke-linejoin="round"/>
</svg>
<div class="t" style="left:556px;top:449px;font-size:12px;font-weight:bold;color:#161616;transform:translate(-50%,-50%) rotate(-90deg)">Workloads</div>
<div class="t" style="left:1391px;top:448.7px;font-size:11.5px;font-weight:bold;color:#161616;transform:translate(-50%,-50%) rotate(90deg)">Actions</div>
<div class="t" id="home" style="left:90.60px;top:40.57px;font-size:13.5px;font-weight:400;color:#0f62fe;font-family:'Liberation Sans';letter-spacing:0.000px;">Home /</div>
<div class="t" id="brand" style="left:58.00px;top:17.15px;font-size:14px;font-weight:400;color:#f4f4f4;font-family:'Liberation Sans';letter-spacing:-0.077px;z-index:6;">IBM <b>Turbonomic</b></div>
<div class="t" id="dash" style="left:90.20px;top:75.10px;font-size:28px;font-weight:400;color:#161616;font-family:'Liberation Sans';letter-spacing:-0.222px;">Dashboards</div>
<div class="t" id="onprem" style="left:98.03px;top:177.60px;font-size:28px;font-weight:400;color:#161616;font-family:'Liberation Sans';letter-spacing:0.108px;">On-prem executive dashboard</div>
<div class="t" id="copy" style="left:1632.00px;top:190.55px;font-size:14px;font-weight:400;color:#fff;font-family:'Liberation Sans';letter-spacing:0.077px;">Copy dashboard</div>
<div class="t" id="t1" style="left:108.03px;top:267.54px;font-size:16px;font-weight:700;color:#161616;font-family:'Liberation Sans';letter-spacing:-0.371px;">OnPrem Environment</div>
<div class="t" id="s1" style="left:108.00px;top:290.50px;font-size:13px;font-weight:400;color:#525252;font-family:'Liberation Sans';letter-spacing:-0.094px;">Global environment</div>
<div class="t" id="t2" style="left:551.00px;top:267.06px;font-size:16px;font-weight:700;color:#161616;font-family:'Liberation Sans';letter-spacing:-0.237px;">OnPrem workload improvements</div>
<div class="t" id="s2" style="left:551.00px;top:290.50px;font-size:13px;font-weight:400;color:#525252;font-family:'Liberation Sans';letter-spacing:-0.094px;">Global environment</div>
<div class="t" id="t3" style="left:1438.03px;top:267.08px;font-size:16px;font-weight:700;color:#161616;font-family:'Liberation Sans';letter-spacing:-0.310px;">All actions</div>
<div class="t" id="s3" style="left:1438.03px;top:290.10px;font-size:13px;font-weight:400;color:#525252;font-family:'Liberation Sans';letter-spacing:-0.100px;">Global environment</div>
<div class="t" id="show3" style="left:1741.03px;top:267.05px;font-size:14px;font-weight:400;color:#0f62fe;font-family:'Liberation Sans';letter-spacing:0.086px;">Show all</div>
<div class="t" id="t4" style="left:108.04px;top:730.54px;font-size:16px;font-weight:700;color:#161616;font-family:'Liberation Sans';letter-spacing:-0.319px;">Performance risks</div>
<div class="t" id="s4" style="left:108.94px;top:753.40px;font-size:13px;font-weight:400;color:#525252;font-family:'Liberation Sans';letter-spacing:-0.212px;">Global environment</div>
<div class="t" id="sa4" style="left:568.03px;top:731.05px;font-size:14px;font-weight:400;color:#0f62fe;font-family:'Liberation Sans';letter-spacing:0.082px;">Show actions</div>
<div class="t" id="t5" style="left:699.94px;top:730.06px;font-size:16px;font-weight:700;color:#161616;font-family:'Liberation Sans';letter-spacing:-0.375px;">Compliance violations</div>
<div class="t" id="s5" style="left:699.94px;top:753.40px;font-size:13px;font-weight:400;color:#525252;font-family:'Liberation Sans';letter-spacing:-0.212px;">Global environment</div>
<div class="t" id="sa5" style="left:1243.97px;top:731.05px;font-size:14px;font-weight:400;color:#0f62fe;font-family:'Liberation Sans';letter-spacing:0.173px;transform:translateX(-100%);transform-origin:right center;">Show actions</div>
<div class="t" id="t6" style="left:1290.09px;top:730.06px;font-size:16px;font-weight:700;color:#161616;font-family:'Liberation Sans';letter-spacing:-0.239px;">Efficiency optimizations</div>
<div class="t" id="s6" style="left:1290.99px;top:753.40px;font-size:13px;font-weight:400;color:#525252;font-family:'Liberation Sans';letter-spacing:-0.153px;">Global environment</div>
<div class="t" id="sa6" style="left:1834.97px;top:731.05px;font-size:14px;font-weight:400;color:#0f62fe;font-family:'Liberation Sans';letter-spacing:0.173px;transform:translateX(-100%);transform-origin:right center;">Show actions</div>
<div class="t" id="hyp" style="left:128.12px;top:343.27px;font-size:11.5px;font-weight:400;color:#525252;font-family:'Liberation Sans';letter-spacing:0.000px;transform: scaleX(0.9215);transform-origin:left center;-webkit-text-stroke:0.3px #525252;">HYPERVISORS</div>
<div class="t" id="vc" style="left:161.95px;top:369.84px;font-size:12px;font-weight:400;color:#161616;font-family:'Liberation Sans';letter-spacing:-0.350px;">vCenter</div>
<div class="t" id="pvm" style="left:161.05px;top:397.74px;font-size:12px;font-weight:400;color:#161616;font-family:'Liberation Sans';letter-spacing:-0.080px;">IBM PowerVM</div>
<div class="t" id="vm" style="left:129.78px;top:431.37px;font-size:11.5px;font-weight:400;color:#525252;font-family:'Liberation Sans';letter-spacing:0.000px;transform: scaleX(0.9416);transform-origin:left center;-webkit-text-stroke:0.3px #525252;">VIRTUAL MACHINES</div>
<div class="t" id="n319" style="left:128.07px;top:451.50px;font-size:28px;font-weight:400;color:#161616;font-family:'Liberation Sans';letter-spacing:1.450px;-webkit-text-stroke:0.5px #fff;">319</div>
<div class="t" id="db" style="left:128.88px;top:507.19px;font-size:11.5px;font-weight:400;color:#525252;font-family:'Liberation Sans';letter-spacing:0.000px;transform: scaleX(0.9051);transform-origin:left center;-webkit-text-stroke:0.3px #525252;">DATABASE SERVERS</div>
<div class="t" id="n24" style="left:128.07px;top:527.70px;font-size:28px;font-weight:400;color:#161616;font-family:'Liberation Sans';letter-spacing:1.900px;-webkit-text-stroke:0.5px #fff;">24</div>
<div class="t" id="vol" style="left:129.78px;top:583.47px;font-size:11.5px;font-weight:400;color:#525252;font-family:'Liberation Sans';letter-spacing:0.000px;transform: scaleX(0.8530);transform-origin:left center;-webkit-text-stroke:0.3px #525252;">VOLUMES</div>
<div class="t" id="n820" style="left:128.07px;top:602.50px;font-size:28px;font-weight:400;color:#161616;font-family:'Liberation Sans';letter-spacing:1.650px;-webkit-text-stroke:0.5px #fff;">820</div>
<div class="t" id="ly0" style="left:590.03px;top:571.07px;font-size:11.5px;font-weight:400;color:#525252;font-family:'Liberation Sans';letter-spacing:0.000px;transform:translateX(-100%);transform-origin:right center;">0</div>
<div class="t" id="ly1" style="left:590.03px;top:533.59px;font-size:11.5px;font-weight:400;color:#525252;font-family:'Liberation Sans';letter-spacing:0.000px;transform:translateX(-100%);transform-origin:right center;">50</div>
<div class="t" id="ly2" style="left:590.03px;top:497.93px;font-size:11.5px;font-weight:400;color:#525252;font-family:'Liberation Sans';letter-spacing:0.000px;transform:translateX(-100%);transform-origin:right center;">100</div>
<div class="t" id="ly3" style="left:590.03px;top:460.99px;font-size:11.5px;font-weight:400;color:#525252;font-family:'Liberation Sans';letter-spacing:0.000px;transform:translateX(-100%);transform-origin:right center;">150</div>
<div class="t" id="ly4" style="left:590.03px;top:423.55px;font-size:11.5px;font-weight:400;color:#525252;font-family:'Liberation Sans';letter-spacing:0.000px;transform:translateX(-100%);transform-origin:right center;">200</div>
<div class="t" id="ly5" style="left:590.03px;top:387.83px;font-size:11.5px;font-weight:400;color:#525252;font-family:'Liberation Sans';letter-spacing:0.000px;transform:translateX(-100%);transform-origin:right center;">250</div>
<div class="t" id="ly6" style="left:590.03px;top:350.92px;font-size:11.5px;font-weight:400;color:#525252;font-family:'Liberation Sans';letter-spacing:0.000px;transform:translateX(-100%);transform-origin:right center;">300</div>
<div class="t" id="ry0" style="left:1360.95px;top:571.43px;font-size:11.5px;font-weight:400;color:#525252;font-family:'Liberation Sans';letter-spacing:0.000px;">0</div>
<div class="t" id="ry1" style="left:1360.95px;top:532.62px;font-size:11.5px;font-weight:400;color:#525252;font-family:'Liberation Sans';letter-spacing:0.000px;">0.5</div>
<div class="t" id="ry2" style="left:1360.05px;top:493.57px;font-size:11.5px;font-weight:400;color:#525252;font-family:'Liberation Sans';letter-spacing:0.000px;">1</div>
<div class="t" id="ry3" style="left:1360.05px;top:455.80px;font-size:11.5px;font-weight:400;color:#525252;font-family:'Liberation Sans';letter-spacing:0.000px;">1.5</div>
<div class="t" id="ry4" style="left:1360.95px;top:416.67px;font-size:11.5px;font-weight:400;color:#525252;font-family:'Liberation Sans';letter-spacing:0.000px;">2</div>
<div class="t" id="ry5" style="left:1360.95px;top:378.98px;font-size:11.5px;font-weight:400;color:#525252;font-family:'Liberation Sans';letter-spacing:0.000px;">2.5</div>
<div class="t" id="ry6" style="left:1360.95px;top:339.77px;font-size:11.5px;font-weight:400;color:#525252;font-family:'Liberation Sans';letter-spacing:0.000px;">3</div>
<div class="t" id="x1" style="left:660.96px;top:583.27px;font-size:11.5px;font-weight:700;color:#525252;font-family:'Liberation Sans';letter-spacing:0.000px;transform: scaleX(0.9286);transform-origin:left center;">Sep 1, 12 PM</div>
<div class="t" id="x2" style="left:837.05px;top:584.07px;font-size:11.5px;font-weight:400;color:#525252;font-family:'Liberation Sans';letter-spacing:0.000px;transform: scaleX(0.8970);transform-origin:left center;">06 PM</div>
<div class="t" id="x3" style="left:978.98px;top:583.27px;font-size:11.5px;font-weight:700;color:#525252;font-family:'Liberation Sans';letter-spacing:0.000px;transform: scaleX(0.9325);transform-origin:left center;">Sep 2, 12 AM</div>
<div class="t" id="x4" style="left:1155.03px;top:584.07px;font-size:11.5px;font-weight:400;color:#525252;font-family:'Liberation Sans';letter-spacing:0.000px;transform: scaleX(0.9520);transform-origin:left center;">06 AM</div>
<div class="t" id="date" style="left:963.00px;top:604.74px;font-size:12px;font-weight:700;color:#161616;font-family:'Liberation Sans';letter-spacing:-0.367px;">Date</div>
<div class="t" id="lg1" style="left:568.90px;top:637.89px;font-size:11px;font-weight:400;color:#525252;font-family:'Liberation Sans';letter-spacing:-0.050px;">Workloads overall</div>
<div class="t" id="lg2" style="left:682.90px;top:637.89px;font-size:11px;font-weight:400;color:#525252;font-family:'Liberation Sans';letter-spacing:-0.019px;">Workloads with performance risks</div>
<div class="t" id="lg3" style="left:875.02px;top:637.89px;font-size:11px;font-weight:400;color:#525252;font-family:'Liberation Sans';letter-spacing:0.175px;">Inefficient workloads</div>
<div class="t" id="lg4" style="left:1005.90px;top:637.89px;font-size:11px;font-weight:400;color:#525252;font-family:'Liberation Sans';letter-spacing:-0.065px;">Workloads out of compliance</div>
<div class="t" id="lg5" style="left:1173.03px;top:637.89px;font-size:11px;font-weight:400;color:#525252;font-family:'Liberation Sans';letter-spacing:-0.040px;">Executed actions</div>
<div class="t" id="l24" style="left:551.06px;top:672.85px;font-size:14px;font-weight:400;color:#161616;font-family:'Liberation Sans';letter-spacing:0.100px;">Last 24 Hours</div>
<div class="t" id="filt" style="left:1438.09px;top:330.15px;font-size:14px;font-weight:400;color:#525252;font-family:'Liberation Sans';letter-spacing:0.440px;">Filter</div>
<div class="t" id="allact" style="left:1512.93px;top:330.15px;font-size:14px;font-weight:400;color:#161616;font-family:'Liberation Sans';letter-spacing:0.160px;">All Actions</div>
<div class="t" id="ay0" style="left:1473.04px;top:546.89px;font-size:11.5px;font-weight:400;color:#525252;font-family:'Liberation Sans';letter-spacing:0.000px;transform:translateX(-100%);transform-origin:right center;">0</div>
<div class="t" id="ay1" style="left:1473.04px;top:517.07px;font-size:11.5px;font-weight:400;color:#525252;font-family:'Liberation Sans';letter-spacing:0.000px;transform:translateX(-100%);transform-origin:right center;">10,000</div>
<div class="t" id="ay2" style="left:1473.04px;top:487.97px;font-size:11.5px;font-weight:400;color:#525252;font-family:'Liberation Sans';letter-spacing:0.000px;transform:translateX(-100%);transform-origin:right center;">20,000</div>
<div class="t" id="ay3" style="left:1473.04px;top:458.87px;font-size:11.5px;font-weight:400;color:#525252;font-family:'Liberation Sans';letter-spacing:0.000px;transform:translateX(-100%);transform-origin:right center;">30,000</div>
<div class="t" id="ay4" style="left:1473.04px;top:429.77px;font-size:11.5px;font-weight:400;color:#525252;font-family:'Liberation Sans';letter-spacing:0.000px;transform:translateX(-100%);transform-origin:right center;">40,000</div>
<div class="t" id="ay5" style="left:1473.04px;top:400.67px;font-size:11.5px;font-weight:400;color:#525252;font-family:'Liberation Sans';letter-spacing:0.000px;transform:translateX(-100%);transform-origin:right center;">50,000</div>
<div class="t" id="ay6" style="left:1473.04px;top:371.57px;font-size:11.5px;font-weight:400;color:#525252;font-family:'Liberation Sans';letter-spacing:0.000px;transform:translateX(-100%);transform-origin:right center;">60,000</div>
<div class="t" id="ax0" style="left:1468.99px;top:559.47px;font-size:11.5px;font-weight:700;color:#525252;font-family:'Liberation Sans';letter-spacing:0.000px;transform: scaleX(0.8939);transform-origin:left center;">Aug 3</div>
<div class="t" id="ax1" style="left:1569.03px;top:560.43px;font-size:11.5px;font-weight:400;color:#525252;font-family:'Liberation Sans';letter-spacing:-0.500px;transform:translateX(-50%);transform-origin:center center;">10</div>
<div class="t" id="ax2" style="left:1655.02px;top:560.43px;font-size:11.5px;font-weight:400;color:#525252;font-family:'Liberation Sans';letter-spacing:-0.700px;transform:translateX(-50%);transform-origin:center center;">17</div>
<div class="t" id="ax3" style="left:1741.05px;top:560.43px;font-size:11.5px;font-weight:400;color:#525252;font-family:'Liberation Sans';letter-spacing:-0.500px;transform:translateX(-50%);transform-origin:center center;">24</div>
<div class="t" id="ax4" style="left:1827.03px;top:560.43px;font-size:11.5px;font-weight:400;color:#525252;font-family:'Liberation Sans';letter-spacing:-0.700px;transform:translateX(-50%);transform-origin:center center;">31</div>
<div class="t" id="pend" style="left:1455.06px;top:598.59px;font-size:11px;font-weight:400;color:#525252;font-family:'Liberation Sans';letter-spacing:-0.086px;">Pending Actions</div>
<div class="t" id="exec" style="left:1560.98px;top:598.59px;font-size:11px;font-weight:400;color:#525252;font-family:'Liberation Sans';letter-spacing:-0.080px;">Executed Actions</div>
<div class="t" id="l30" style="left:1438.05px;top:672.85px;font-size:14px;font-weight:400;color:#161616;font-family:'Liberation Sans';letter-spacing:0.000px;">Last 30 Days</div>
<div class="t" id="d1n" style="left:324.51px;top:858.02px;font-size:21px;font-weight:400;color:#393939;font-family:'Liberation Sans';letter-spacing:-0.300px;transform:translateX(-50%);transform-origin:center center;-webkit-text-stroke:0.4px #fff;">487</div>
<div class="t" id="d1l" style="left:324.55px;top:884.92px;font-size:13.5px;font-weight:400;color:#393939;font-family:'Liberation Sans';letter-spacing:0.000px;transform:translateX(-50%) scaleX(0.8485);transform-origin:center center;">Risks</div>
<div class="t" id="d2n" style="left:913.48px;top:858.12px;font-size:21px;font-weight:400;color:#393939;font-family:'Liberation Sans';letter-spacing:0.000px;transform:translateX(-50%);transform-origin:center center;-webkit-text-stroke:0.4px #fff;">4</div>
<div class="t" id="d2l" style="left:913.00px;top:885.01px;font-size:13.5px;font-weight:400;color:#393939;font-family:'Liberation Sans';letter-spacing:0.000px;transform:translateX(-50%) scaleX(0.9295);transform-origin:center center;">Violations</div>
<div class="t" id="d3n" style="left:1500.54px;top:858.22px;font-size:21px;font-weight:400;color:#393939;font-family:'Liberation Sans';letter-spacing:-1.000px;transform:translateX(-50%);transform-origin:center center;-webkit-text-stroke:0.4px #fff;">387</div>
<div class="t" id="d3l" style="left:1501.45px;top:884.32px;font-size:13.5px;font-weight:400;color:#393939;font-family:'Liberation Sans';letter-spacing:0.000px;transform:translateX(-50%) scaleX(0.9042);transform-origin:center center;">Optimizations</div>
<div class="t" id="pl0" style="left:453.06px;top:793.69px;font-size:11px;font-weight:400;color:#525252;font-family:'Liberation Sans';letter-spacing:0.000px;">18 Memory</div>
<div class="t" id="pl1" style="left:453.96px;top:824.69px;font-size:11px;font-weight:400;color:#525252;font-family:'Liberation Sans';letter-spacing:0.000px;">8 Virtual Memory</div>
<div class="t" id="pl2" style="left:453.96px;top:855.69px;font-size:11px;font-weight:400;color:#525252;font-family:'Liberation Sans';letter-spacing:0.000px;">5 Virtual CPU</div>
<div class="t" id="pl3" style="left:453.06px;top:886.69px;font-size:11px;font-weight:400;color:#525252;font-family:'Liberation Sans';letter-spacing:0.000px;">1 CPU</div>
<div class="t" id="pl4" style="left:453.96px;top:917.69px;font-size:11px;font-weight:400;color:#525252;font-family:'Liberation Sans';letter-spacing:0.000px;">455 Other</div>
<div class="t" id="cl0" style="left:1042.00px;top:793.69px;font-size:11px;font-weight:400;color:#525252;font-family:'Liberation Sans';letter-spacing:0.000px;">4 Misconfiguration</div>
<div class="t" id="el0" style="left:1629.06px;top:793.69px;font-size:11px;font-weight:400;color:#525252;font-family:'Liberation Sans';letter-spacing:0.000px;">124 Virtual Memory</div>
<div class="t" id="el1" style="left:1629.96px;top:824.69px;font-size:11px;font-weight:400;color:#525252;font-family:'Liberation Sans';letter-spacing:0.000px;">98 Virtual CPU</div>
<div class="t" id="el2" style="left:1629.96px;top:855.69px;font-size:11px;font-weight:400;color:#525252;font-family:'Liberation Sans';letter-spacing:0.000px;">24 Heap</div>
<div class="t" id="el3" style="left:1629.96px;top:886.69px;font-size:11px;font-weight:400;color:#525252;font-family:'Liberation Sans';letter-spacing:0.000px;">2 Storage Amount</div>
<div class="t" id="el4" style="left:1629.96px;top:917.69px;font-size:11px;font-weight:400;color:#525252;font-family:'Liberation Sans';letter-spacing:0.000px;">2 Storage Access</div>
<div class="t" id="el5" style="left:1629.06px;top:948.69px;font-size:11px;font-weight:400;color:#525252;font-family:'Liberation Sans';letter-spacing:0.000px;">137 Other</div>
</body></html>
